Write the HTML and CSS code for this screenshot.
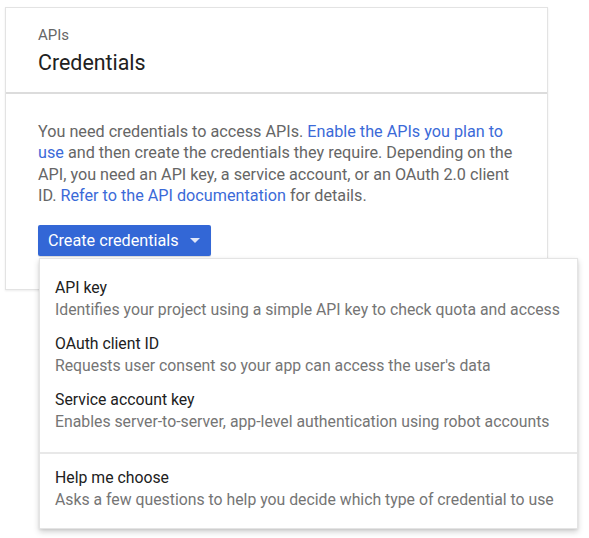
FILE: index.html
```html
<!DOCTYPE html>
<html>
<head>
<meta charset="utf-8">
<link rel="stylesheet" href="styles.css">
</head>
<body>
<div class="page">
  <div class="card">
    <div class="card-header">
      <div class="eyebrow">APIs</div>
      <div class="title">Credentials</div>
    </div>
    <div class="card-body">
      <p class="intro">You need credentials to access APIs. <a href="#">Enable the APIs you plan to use</a> and then create the credentials they require. Depending on the API, you need an API key, a service account, or an OAuth 2.0 client ID. <a href="#">Refer to the API documentation</a> for details.</p>
      <div class="btn-wrap">
        <button class="btn">Create credentials <span class="caret"></span></button>
        <div class="menu">
          <div class="menu-section">
            <div class="menu-item">
              <div class="item-title">API key</div>
              <div class="item-desc">Identifies your project using a simple API key to check quota and access</div>
            </div>
            <div class="menu-item">
              <div class="item-title">OAuth client ID</div>
              <div class="item-desc">Requests user consent so your app can access the user's data</div>
            </div>
            <div class="menu-item">
              <div class="item-title">Service account key</div>
              <div class="item-desc">Enables server-to-server, app-level authentication using robot accounts</div>
            </div>
          </div>
          <div class="menu-section help">
            <div class="menu-item">
              <div class="item-title">Help me choose</div>
              <div class="item-desc">Asks a few questions to help you decide which type of credential to use</div>
            </div>
          </div>
        </div>
      </div>
    </div>
  </div>
</div>
</body>
</html>
```

FILE: styles.css
```css
html, body {
  margin: 0;
  padding: 0;
  background: #fff;
}
body {
  min-height: 538px;
  font-family: Roboto, "Liberation Sans", Arial, sans-serif;
}
.page {
  padding: 7px 0 0 5px;
  min-height: 531px;
}
.card {
  width: 541px;
  height: 281px;
  border: 1px solid #e3e3e3;
  box-shadow: 0 1px 2px rgba(0,0,0,0.08);
  background: #fff;
}
.card-header {
  padding: 18px 32px 16px;
  border-bottom: 2px solid #dcdcdc;
}
.eyebrow {
  font-size: 15px;
  line-height: 19px;
  color: #666;
}
.title {
  margin-top: 4px;
  font-size: 21.4px;
  line-height: 27px;
  color: #212121;
}
.card-body {
  padding: 27px 32px 0;
}
.intro {
  margin: 0;
  font-size: 16.2px;
  line-height: 21.3px;
  color: #666;
  width: 480px;
}
.intro a {
  color: #3b6ad8;
  text-decoration: none;
}
.btn-wrap {
  position: relative;
  margin-top: 19px;
}
.btn {
  display: flex;
  align-items: center;
  width: 173px;
  height: 31px;
  padding: 0 0 0 10px;
  border: none;
  border-radius: 2px;
  background: #3367d6;
  color: #fff;
  font-family: Roboto, "Liberation Sans", Arial, sans-serif;
  font-size: 16.2px;
  box-shadow: 0 1px 1px rgba(0,0,0,0.15);
}
.caret {
  display: inline-block;
  margin-left: 11px;
  width: 0;
  height: 0;
  border-left: 5px solid transparent;
  border-right: 5px solid transparent;
  border-top: 5px solid #dfe6f8;
}
.menu {
  position: absolute;
  z-index: 2;
  left: 1px;
  top: 33px;
  width: 539px;
  height: 271px;
  box-sizing: border-box;
  background: #fff;
  border: 1px solid #e4e4e4;
  box-shadow: 0 3px 6px rgba(0,0,0,0.18), 0 1px 2px rgba(0,0,0,0.08);
}
.menu-section {
  display: flex;
  flex-direction: column;
  gap: 13px;
  padding: 18px 15px 20px;
  border-bottom: 2px solid #e8e8e8;
}
.menu-section.help {
  border-bottom: none;
  padding-top: 13px;
}
.item-title {
  font-size: 15.8px;
  line-height: 21.5px;
  color: #212121;
  white-space: nowrap;
}
.item-desc {
  font-size: 15.8px;
  line-height: 21.5px;
  color: #757575;
  white-space: nowrap;
}
```
